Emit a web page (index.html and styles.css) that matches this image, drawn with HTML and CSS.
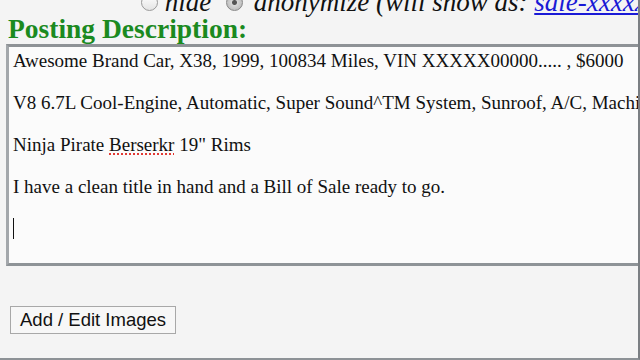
FILE: index.html
```html
<!DOCTYPE html>
<html lang="en">
<head>
    <meta charset="UTF-8">
    <title>Posting Description</title>
    <link rel="stylesheet" href="styles.css">
</head>
<body>
<div class="page">
    <div class="reply-line">
        <span class="radio"></span> hide
        <span class="radio checked"></span> <span class="anon">anonymize (will show as: <a href="#">sale-xxxxxxxxxx@craigslist.org</a>)</span>
    </div>
    <h2 class="section-title">Posting Description:</h2>
    <div class="description">
        <p>Awesome Brand Car, X38, 1999, 100834 Miles, VIN XXXXX00000..... , $6000</p>
        <p>V8 6.7L Cool-Engine, Automatic, Super Sound^TM System, Sunroof, A/C, Machine Gun Mounts</p>
        <p>Ninja Pirate <span class="misspelled">Berserkr</span> 19" Rims</p>
        <p>I have a clean title in hand and a Bill of Sale ready to go.</p>
        <p><span class="caret"></span></p>
    </div>
    <div class="actions">
        <button type="button">Add / Edit Images</button>
    </div>
</div>
</body>
</html>
```

FILE: styles.css
```css
html, body {
    margin: 0;
    padding: 0;
    background: #f4f4f4;
}
body {
    width: 638px;
    height: 358px;
    overflow: hidden;
    border-right: 2px solid #7b7f83;
    border-bottom: 2px solid #8d9296;
}
.page {
    width: 700px;
    font-family: "Liberation Serif", "Times New Roman", serif;
    color: #111;
}
.reply-line {
    font-style: italic;
    font-size: 27px;
    line-height: 26px;
    margin-top: -11px;
    padding-left: 141px;
    white-space: nowrap;
}
.reply-line a {
    color: #1a1ad6;
}
.anon {
    margin-left: 4px;
}
.radio {
    display: inline-block;
    width: 15px;
    height: 15px;
    border: 1px solid #9a9a9a;
    border-radius: 50%;
    background: linear-gradient(#ffffff, #e4e4e4);
    vertical-align: 0;
}
.radio.checked {
    margin-left: 8px;
    background: radial-gradient(circle, #555 0 2px, #d8d8d8 3px, #bcbcbc 8px);
    border-color: #888;
}
.section-title {
    margin: 1px 0 2px 8px;
    font-size: 27.5px;
    line-height: 26px;
    font-weight: bold;
    color: #1b8a1f;
}
.description {
    margin-left: 6px;
    width: 680px;
    height: 210px;
    padding: 3px 4px;
    background: #fbfbfb;
    border: 3px solid #a3a7ab;
    border-top-color: #8e9296;
    border-bottom-color: #8e9397;
    font-size: 19px;
    line-height: 21px;
    white-space: nowrap;
}
.description p {
    margin: 0 0 21px 0;
}
.misspelled {
    text-decoration: underline dotted #e0302a;
    text-underline-offset: 3px;
}
.caret {
    display: inline-block;
    width: 1px;
    height: 21px;
    background: #111;
    vertical-align: -4px;
}
.actions {
    padding: 40px 0 0 10px;
}
button {
    font-family: "Liberation Sans", Arial, sans-serif;
    font-size: 18.5px;
    color: #111;
    background: #f7f7f7;
    border: 1px solid #a8a8a8;
    padding: 2px 9px;
    height: 28px;
}
```
